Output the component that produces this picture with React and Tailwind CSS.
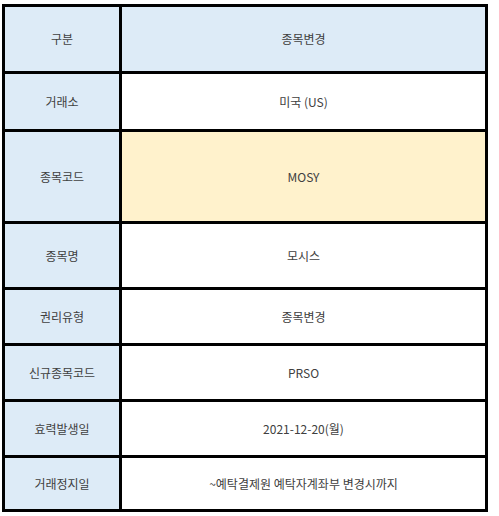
const rows = [
  { label: "구분", value: "종목변경", h: "h-[64px]", head: true },
  { label: "거래소", value: "미국 (US)", h: "h-[55px]" },
  { label: "종목코드", value: "MOSY", h: "h-[89px]", highlight: true },
  { label: "종목명", value: "모시스", h: "h-[63px]" },
  { label: "권리유형", value: "종목변경", h: "h-[53px]" },
  { label: "신규종목코드", value: "PRSO", h: "h-[53px]" },
  { label: "효력발생일", value: "2021-12-20(월)", h: "h-[53px]" },
  { label: "거래정지일", value: "~예탁결제원 예탁자계좌부 변경시까지", h: "h-[51px]" },
];

export default function App() {
  return (
    <div className="w-[499px] h-[516px] bg-white pt-[4px] pl-[2px] font-['Noto_Sans_CJK_KR',sans-serif] text-[12px] text-[#404040]">
      <div className="grid w-[486px] grid-cols-[114px_363px] gap-[3px] bg-black p-[3px]">
        {rows.map((r) => (
          <div key={r.label} className="contents">
            <div className={`${r.h} flex items-center justify-center bg-[#ddebf7]`}>{r.label}</div>
            <div
              className={`${r.h} flex items-center justify-center ${
                r.head ? "bg-[#ddebf7]" : r.highlight ? "bg-[#fff2cc]" : "bg-white"
              }`}
            >
              {r.value}
            </div>
          </div>
        ))}
      </div>
    </div>
  );
}
